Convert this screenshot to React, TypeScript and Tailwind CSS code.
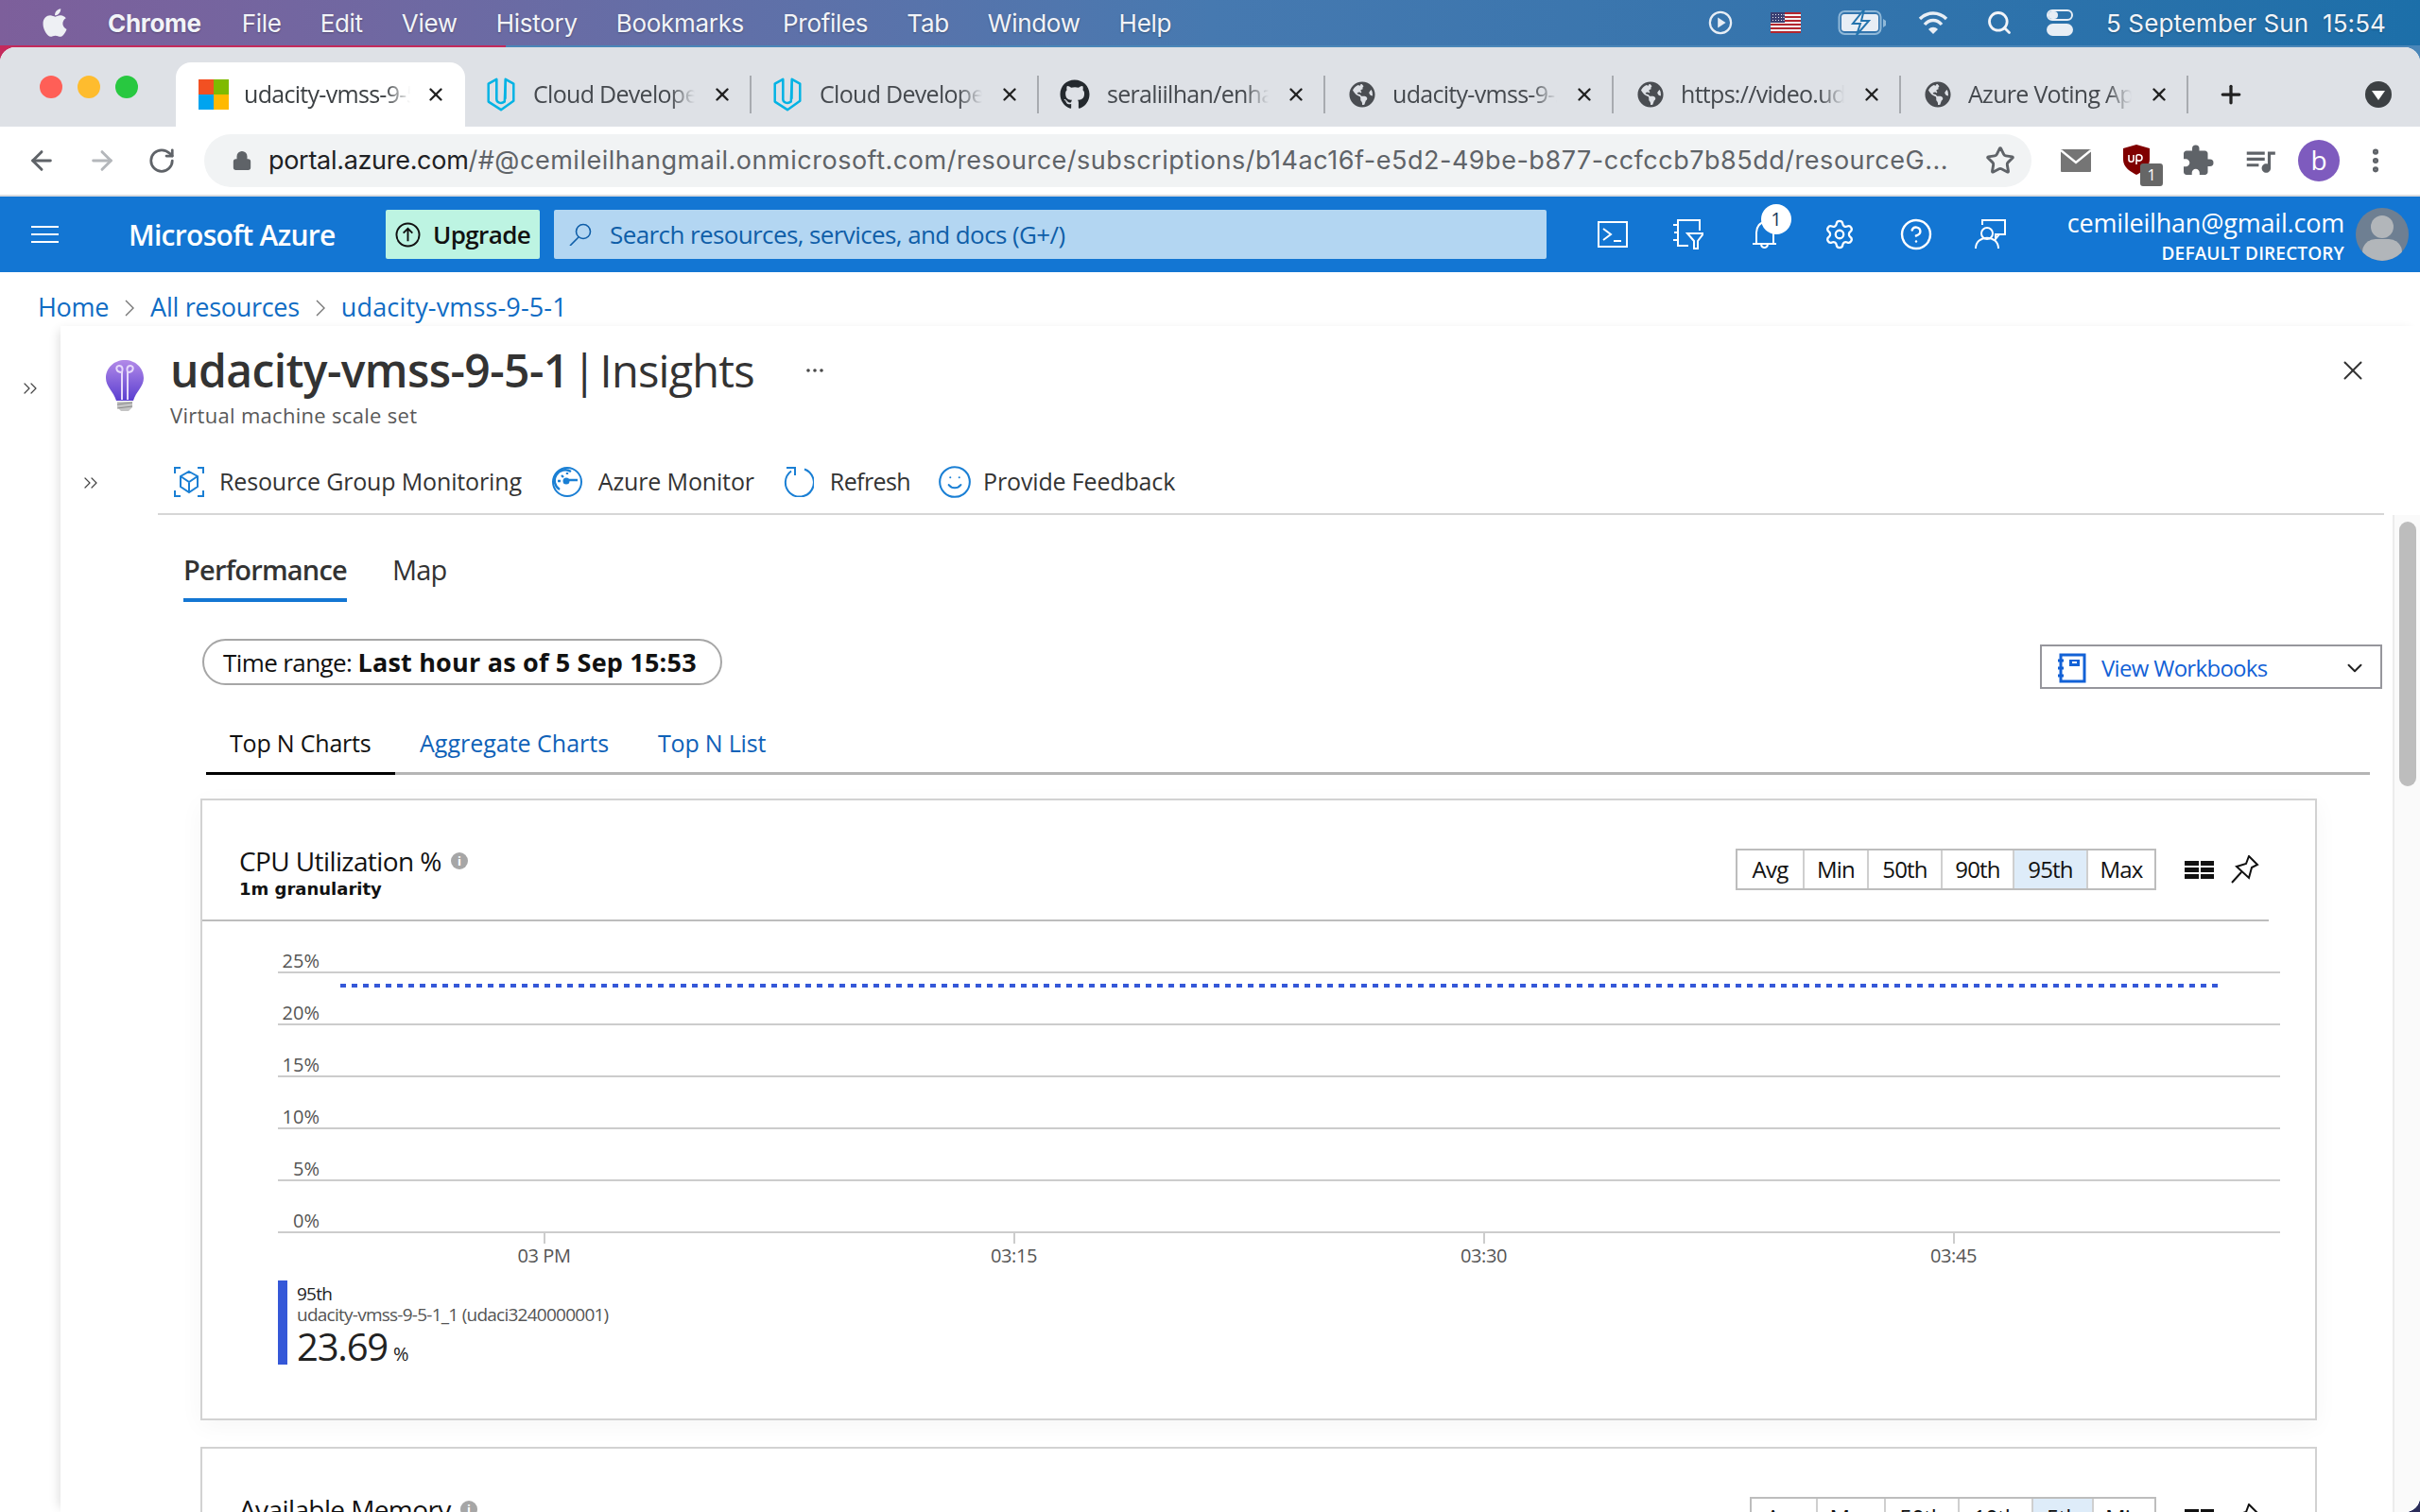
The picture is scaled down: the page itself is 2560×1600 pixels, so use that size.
import { ArrowLeft, ArrowRight, RotateCw, Lock, Star, X, Plus, ChevronDown, ChevronsRight, Search, EllipsisVertical, Settings, CircleHelp, Smile, Ellipsis } from 'lucide-react';
import { FaApple, FaGithub, FaGlobeAmericas } from 'react-icons/fa';
import { MdExtension, MdQueueMusic } from 'react-icons/md';

const tabs = [
  { title: 'Cloud Developer', icon: 'udacity', w: 'w-[303px]' },
  { title: 'Cloud Developer', icon: 'udacity', w: 'w-[304px]' },
  { title: 'seraliilhan/enhance', icon: 'github', w: 'w-[303px]' },
  { title: 'udacity-vmss-9-5-1', icon: 'globe', w: 'w-[305px]' },
  { title: 'https://video.udacity', icon: 'globe', w: 'w-[304px]' },
  { title: 'Azure Voting App', icon: 'globe', w: 'w-[304px]' },
];

const menus = ['File', 'Edit', 'View', 'History', 'Bookmarks', 'Profiles', 'Tab', 'Window', 'Help'];
const yLabels = ['25%', '20%', '15%', '10%', '5%', '0%'];
const xLabels = ['03 PM', '03:15', '03:30', '03:45'];

function UdacityLogo() {
  return (
    <svg viewBox="0 0 32 40" className="w-[32px] h-[38px] shrink-0" fill="none" stroke="#02b3e4" strokeWidth="2.6" strokeLinejoin="round">
      <path d="M2 8 L11 3 V25 C11 29 16 31 20 28 L21 3 L30 8 V27 L16 37 L2 28 Z" />
      <path d="M11 3 V25 M21 3 V25" strokeWidth="2" />
    </svg>
  );
}

function MicrosoftLogo() {
  return (
    <div className="grid grid-cols-2 w-[32px] h-[32px] shrink-0">
      <div className="bg-[#f25022]" />
      <div className="bg-[#7fba00]" />
      <div className="bg-[#00a4ef]" />
      <div className="bg-[#ffb900]" />
    </div>
  );
}

function UsFlag() {
  return (
    <svg viewBox="0 0 32 22" className="w-[32px] h-[22px]">
      <rect width="32" height="22" fill="#f4f4f4" />
      {[0, 4, 8, 12, 16, 20].map((y) => (
        <rect key={y} y={y} width="32" height="2" fill="#b3262e" />
      ))}
      <rect width="15" height="11" fill="#3a3f72" />
      {[2, 5, 8].map((y) =>
        [2, 5, 8, 11, 13.5].map((x) => <rect key={`${x}-${y}`} x={x} y={y} width="1" height="1" fill="#e8e8ee" />)
      )}
    </svg>
  );
}

function Battery() {
  return (
    <svg viewBox="0 0 52 28" className="w-[52px] h-[28px]" fill="none">
      <rect x="1.5" y="2" width="44" height="24" rx="6" stroke="#8fb8d8" strokeWidth="2" />
      <rect x="4" y="5" width="39" height="18" rx="3" fill="#e8eef5" />
      <path d="M48 10 L51 12 V17 L48 19 Z" fill="#8fb8d8" />
      <path d="M28 0 L16 15 H24 L20 27 L33 12 H25 Z" fill="#e8eef5" stroke="#2474ae" strokeWidth="2" />
    </svg>
  );
}

function Wifi() {
  return (
    <svg viewBox="0 0 32 26" className="w-[32px] h-[26px]" fill="none" stroke="#e8eef5" strokeWidth="3.4">
      <path d="M2 9 C10 1 22 1 30 9" />
      <path d="M7 15 C12 9 20 9 25 15" />
      <path d="M16 25 L11 20 C14 17 18 17 21 20 Z" fill="#e8eef5" stroke="none" />
    </svg>
  );
}

function ToggleIcon() {
  return (
    <div className="flex flex-col gap-[3px] w-[28px]">
      <div className="h-[12px] rounded-full border-2 border-[#e8eef5] flex justify-start">
        <div className="w-[10px] h-[8px] rounded-full bg-[#e8eef5]" />
      </div>
      <div className="h-[13px] rounded-full bg-[#e8eef5]" />
    </div>
  );
}

function ShieldBadge() {
  return (
    <div className="relative w-[42px] h-[44px]">
      <svg viewBox="0 0 28 32" className="w-[28px] h-[32px]">
        <path d="M14 0 L28 4 V16 C28 24 20 29 14 32 C8 29 0 24 0 16 V4 Z" fill="#800000" />
        <path d="M6 11 V16 C6 19 11 19 11 16 V11 M14 21 V12 C14 10 20 10 20 14 C20 18 14 18 14 15" stroke="#fff" strokeWidth="1.6" fill="none" />
      </svg>
      <div className="absolute left-[18px] top-[20px] w-[24px] h-[24px] rounded-[3px] bg-[#666] text-white text-[16px] leading-[24px] text-center">1</div>
    </div>
  );
}

function MailIcon() {
  return (
    <svg viewBox="0 0 32 24" className="w-[32px] h-[24px] mr-[34px]" fill="none">
      <rect width="32" height="24" rx="1" fill="#757575" />
      <path d="M0 1 L16 14 L32 1" stroke="#fff" strokeWidth="2.4" />
    </svg>
  );
}

function TerminalIcon() {
  return (
    <svg viewBox="0 0 32 28" className="w-[32px] h-[28px]" fill="none" stroke="#fff" strokeWidth="2">
      <rect x="1" y="1" width="30" height="26" />
      <path d="M6 8 L14 14 L6 20 M17 21 H25" />
    </svg>
  );
}

function FilterBookIcon() {
  return (
    <svg viewBox="0 0 32 32" className="w-[32px] h-[32px]" fill="none" stroke="#fff" strokeWidth="2">
      <path d="M28 12 V1 H5 V28 H16 M0 6 H5 M0 22 H5 M1 14 H5" />
      <path d="M15 15 H32 L26 23 V31 H22 V23 Z" />
    </svg>
  );
}

function BellIcon() {
  return (
    <svg viewBox="0 0 26 32" className="w-[26px] h-[32px]" fill="none" stroke="#fff" strokeWidth="2">
      <path d="M4 26 V14 C4 8 8 3 13 3 C18 3 22 8 22 14 V26 M0 26 H25 M9 27 C10 31 15 31 16 27" />
    </svg>
  );
}

function FeedbackIcon() {
  return (
    <svg viewBox="0 0 34 32" className="w-[34px] h-[32px]" fill="none" stroke="#fff" strokeWidth="2">
      <path d="M9 6 V1 H33 V16 H27 L23 21 V16 H29" />
      <circle cx="14" cy="15" r="6" />
      <path d="M2 31 C2 16 26 16 26 31" />
    </svg>
  );
}

function CubeIcon() {
  return (
    <svg viewBox="0 0 32 32" className="w-[32px] h-[32px]" fill="none" stroke="#1a7fd4" strokeWidth="2">
      <path d="M1 7 V1 H7 M25 1 H31 V7 M31 25 V31 H25 M7 31 H1 V25" />
      <path d="M16 5 L25 10 V21 L16 27 L7 21 V10 Z M7 10 L16 16 L25 10 M16 16 V27" />
    </svg>
  );
}

function GaugeIcon() {
  return (
    <svg viewBox="0 0 32 32" className="w-[32px] h-[32px]" fill="none" stroke="#1a7fd4" strokeWidth="2">
      <circle cx="16" cy="16" r="15" />
      <path d="M17 14 H27 M8 24 A11 11 0 0 1 20 5 M6 15 H9 M10 9 L12 11 M16 6 V8" strokeWidth="2.4" />
      <circle cx="15" cy="15" r="2.5" fill="#1a7fd4" />
    </svg>
  );
}

function RefreshIcon() {
  return (
    <svg viewBox="0 0 32 32" className="w-[32px] h-[32px]" fill="none" stroke="#1a7fd4" strokeWidth="2">
      <path d="M8 4.5 A15 15 0 1 0 22 2.5" />
      <path d="M3 1 H12 V9" />
    </svg>
  );
}

function BulbIcon() {
  return (
    <svg viewBox="0 0 40 54" className="w-[40px] h-[54px]">
      <defs>
        <linearGradient id="bulb" x1="0" y1="0" x2="0" y2="1">
          <stop offset="0" stopColor="#b28ae8" />
          <stop offset="1" stopColor="#5b3fd0" />
        </linearGradient>
      </defs>
      <path d="M20 0 C31 0 40 8 40 19 C40 28 32 33 29 43 H11 C8 33 0 28 0 19 C0 8 9 0 20 0 Z" fill="url(#bulb)" />
      <path d="M17 42 V13 M23 42 V13 M17 13 C10 13 10 6 14 6 C18 6 18 10 17 13 M23 13 C30 13 30 6 26 6 C22 6 22 10 23 13" stroke="#e6d9fa" strokeWidth="2" fill="none" />
      <path d="M12 44 H28 V50 L24 54 H16 L12 50 Z" fill="#c4c4c4" />
      <path d="M12 47 L28 45 M12 51 L28 49" stroke="#8a8a8a" strokeWidth="1" />
    </svg>
  );
}

function NotebookIcon() {
  return (
    <svg viewBox="0 0 30 32" className="w-[30px] h-[32px]" fill="none" stroke="#1261d6" strokeWidth="3">
      <path d="M3 2 H28 V30 H3 Z" />
      <path d="M0 8 H6 M0 16 H6 M0 24 H6" />
      <rect x="12" y="7" width="11" height="7" fill="#1261d6" stroke="none" />
      <rect x="15" y="9" width="5" height="2" fill="#fff" stroke="none" />
    </svg>
  );
}

function PinIcon() {
  return (
    <svg viewBox="0 0 30 30" className="w-[30px] h-[30px]" fill="none" stroke="#111" strokeWidth="2">
      <path d="M1 29 L11 18 M19 1 L28 10 L22 13 L19 24 L6 12 L16 9 Z" />
    </svg>
  );
}

function ChevronPlain() {
  return (
    <svg viewBox="0 0 12 20" className="w-[12px] h-[20px] mx-[6px]" fill="none" stroke="#777" strokeWidth="1.4">
      <path d="M2 2 L10 10 L2 18" />
    </svg>
  );
}

function TabIcon({ name }: { name: string }) {
  if (name === 'udacity') return <UdacityLogo />;
  if (name === 'github') return <FaGithub className="w-[32px] h-[32px] shrink-0 text-[#24292e]" />;
  return <FaGlobeAmericas className="w-[28px] h-[28px] ml-[3px] shrink-0 text-[#4a4d52]" />;
}

function MetricHeader({ title, sub, options, active }: { title: string; sub?: string; options: { label: string; w: string }[]; active: string }) {
  return (
    <div className="flex items-center justify-between h-[128px] pt-[24px] mr-[49px] border-b-2 border-[#bdbdbd] pl-[39px]">
      <div className="flex flex-col">
        <div className="flex items-center gap-[10px] h-[38px] text-[28px] tracking-[-0.6px] text-[#111]">
          {title}
          <span className="w-[18px] h-[18px] rounded-full bg-[#a6a6a6] text-white text-[13px] leading-[18px] text-center font-bold">i</span>
        </div>
        {sub ? <div className="font-['DejaVu_Sans'] font-bold text-[18px] leading-[22px] text-[#111]">{sub}</div> : <div className="h-[22px]" />}
      </div>
      <div className="flex items-center -mt-[4px]">
        <div className="flex h-[44px] border-2 border-[#bdbdbd] text-[24px] tracking-[-0.8px] text-[#111]">
          {options.map((o, i) => (
            <div
              key={o.label}
              className={`${o.w} flex items-center justify-center ${i > 0 ? 'border-l-2 border-[#cfcfcf]' : ''} ${o.label === active ? 'bg-[#deecf9]' : ''}`}
            >
              {o.label}
            </div>
          ))}
        </div>
        <div className="grid grid-cols-2 gap-x-[2px] gap-y-[2px] ml-[30px] w-[31px]">
          {[0, 1, 2, 3, 4, 5].map((n) => (
            <div key={n} className="h-[5px] bg-[#111]" />
          ))}
        </div>
        <div className="ml-[18px] mr-[10px]">
          <PinIcon />
        </div>
      </div>
    </div>
  );
}

export default function App() {
  return (
    <div className="w-[2560px] h-[1600px] overflow-hidden font-['Open_Sans',sans-serif] bg-[#2b2d5a]">
      {/* Mac menu bar */}
      <div className="h-12 flex items-center justify-between bg-gradient-to-r from-[#7d5f9b] via-[#4679b0] to-[#1c6fa9] font-['Inter',sans-serif] text-[26px] text-[#f2f4f8] pl-[43px] pr-[36px] [text-shadow:0_1px_2px_rgba(0,0,0,0.3)]">
        <div className="flex items-center">
          <FaApple className="w-[30px] h-[34px] text-[#eef0f4] mr-[41px]" />
          <span className="font-bold mr-[43px] tracking-[-0.3px]">Chrome</span>
          <div className="flex items-center gap-[41px] tracking-[-0.3px]">
            {menus.map((m) => (
              <span key={m}>{m}</span>
            ))}
          </div>
        </div>
        <div className="flex items-center">
          <svg viewBox="0 0 28 28" className="w-[26px] h-[26px] mr-[40px]" fill="none" stroke="#e8eef5" strokeWidth="2.4">
            <circle cx="14" cy="14" r="12" />
            <path d="M11 8 L20 14 L11 20 Z" fill="#e8eef5" stroke="none" />
          </svg>
          <div className="mr-[39px]"><UsFlag /></div>
          <div className="mr-[33px]"><Battery /></div>
          <div className="mr-[40px]"><Wifi /></div>
          <Search className="w-[28px] h-[28px] mr-[36px]" strokeWidth={2.4} />
          <div className="mr-[35px]"><ToggleIcon /></div>
          <span className="tracking-[0.1px]">5 September Sun&nbsp;&nbsp;15:54</span>
        </div>
      </div>

      {/* Browser window */}
      <div className="h-[1552px] overflow-hidden rounded-br-[16px] bg-[linear-gradient(to_right,#c42a5c_535px,#4a86b8_535px)]">
        <div className="h-full pt-[2px]">
          <div className="h-full flex flex-col overflow-hidden rounded-t-[16px] bg-white">
            {/* Tab strip */}
            <div className="h-[84px] shrink-0 bg-[#dee1e6] flex items-end">
              <div className="w-[186px] h-full flex items-center gap-[16px] pl-[42px]">
                <div className="w-[24px] h-[24px] rounded-full bg-[#ff5f57]" />
                <div className="w-[24px] h-[24px] rounded-full bg-[#febc2e]" />
                <div className="w-[24px] h-[24px] rounded-full bg-[#28c840]" />
              </div>
              <div className="w-[306px] h-[68px] bg-white rounded-t-[16px] flex items-center pl-[24px] pr-[20px] gap-[16px]">
                <MicrosoftLogo />
                <span className="flex-1 overflow-hidden whitespace-nowrap text-[25px] tracking-[-0.7px] text-[#3c4043] [mask-image:linear-gradient(to_right,black_85%,transparent)]">udacity-vmss-9-5-1</span>
                <X className="w-[22px] h-[22px] text-[#222]" strokeWidth={2.6} />
              </div>
              {tabs.map((t, i) => (
                <div key={i} className={`${t.w} h-[68px] flex items-center pl-[22px] pr-[20px] gap-[18px] relative`}>
                  <TabIcon name={t.icon} />
                  <span className="flex-1 overflow-hidden whitespace-nowrap text-[25px] tracking-[-0.7px] text-[#45494e] [mask-image:linear-gradient(to_right,black_85%,transparent)]">{t.title}</span>
                  <X className="w-[22px] h-[22px] text-[#222]" strokeWidth={2.6} />
                  <div className="absolute right-0 top-[14px] w-[2px] h-[40px] bg-[#a8abb0]" />
                </div>
              ))}
              <div className="flex-1 h-[68px] flex items-center justify-between pl-[30px] pr-[30px]">
                <Plus className="w-[30px] h-[30px] text-[#222]" strokeWidth={2.6} />
                <div className="w-[28px] h-[28px] rounded-full bg-[#3c4043] flex items-center justify-center">
                  <div className="w-0 h-0 border-l-[7px] border-r-[7px] border-t-[10px] border-l-transparent border-r-transparent border-t-white mt-[2px]" />
                </div>
              </div>
            </div>

            {/* Address bar */}
            <div className="h-[74px] shrink-0 flex items-center border-b-2 border-[#dadce0] bg-white">
              <div className="w-[216px] flex items-center gap-[32px] pl-[28px]">
                <ArrowLeft className="w-[32px] h-[32px] text-[#5f6368]" strokeWidth={2.2} />
                <ArrowRight className="w-[32px] h-[32px] text-[#b4b7bb]" strokeWidth={2.2} />
                <RotateCw className="w-[30px] h-[30px] text-[#5f6368]" strokeWidth={2.2} />
              </div>
              <div className="w-[1933px] h-[56px] rounded-full bg-[#f1f3f4] flex items-center pl-[29px] pr-[17px]">
                <Lock className="w-[22px] h-[24px] text-[#5f6368] fill-[#5f6368] mr-[17px]" />
                <span className="flex-1 pt-[1px] font-['Inter',sans-serif] text-[27px] tracking-[0.52px] whitespace-nowrap overflow-hidden text-[#5f6368]">
                  <span className="text-[#202124] tracking-[-0.3px]">portal.azure.com</span>/#@cemileilhangmail.onmicrosoft.com/resource/subscriptions/b14ac16f-e5d2-49be-b877-ccfccb7b85dd/resourceG...
                </span>
                <Star className="w-[32px] h-[32px] text-[#5f6368] ml-[20px]" strokeWidth={2.2} />
              </div>
              <div className="flex-1 flex items-center pl-[31px]">
                <MailIcon />
                <div className="mr-[22px] mt-[10px]"><ShieldBadge /></div>
                <MdExtension className="w-[36px] h-[36px] text-[#5f6368] mr-[29px] -ml-[3px]" />
                <MdQueueMusic className="w-[38px] h-[38px] text-[#5f6368] mr-[21px]" />
                <div className="w-[44px] h-[44px] rounded-full bg-[#7e5bbe] text-white text-[28px] leading-[42px] text-center mr-[22px]">b</div>
                <EllipsisVertical className="w-[32px] h-[32px] text-[#5f6368]" strokeWidth={2.6} />
              </div>
            </div>

            {/* Azure top bar */}
            <div className="h-[80px] shrink-0 flex items-center bg-[#1376d3] text-white">
              <div className="w-[136px] pl-[33px] flex flex-col gap-[6px]">
                <div className="w-[29px] h-[2px] bg-white" />
                <div className="w-[29px] h-[2px] bg-white" />
                <div className="w-[29px] h-[2px] bg-white" />
              </div>
              <span className="w-[272px] text-[30px] font-semibold tracking-[-0.7px]">Microsoft Azure</span>
              <div className="w-[163px] h-[52px] rounded-[2px] bg-[#bdf4e2] text-[#111] flex items-center pl-[10px] gap-[13px] text-[26px] font-semibold tracking-[-0.6px]">
                <svg viewBox="0 0 28 28" className="w-[27px] h-[27px]" fill="none" stroke="#111" strokeWidth="2">
                  <circle cx="14" cy="14" r="12.5" />
                  <path d="M14 21 V8 M9 12 L14 7 L19 12" />
                </svg>
                Upgrade
              </div>
              <div className="ml-[15px] w-[1050px] h-[52px] rounded-[2px] bg-[#b3d6f2] flex items-center pl-[16px] gap-[19px] text-[26px] tracking-[-0.6px] text-[#0f5ea8]">
                <svg viewBox="0 0 24 24" className="w-[24px] h-[24px]" fill="none" stroke="#0f5ea8" strokeWidth="1.6">
                  <circle cx="15" cy="9" r="7.5" />
                  <path d="M10 15 L1 24" />
                </svg>
                Search resources, services, and docs (G+/)
              </div>
              <div className="w-[54px]" />
              <div className="w-[80px]"><TerminalIcon /></div>
              <div className="w-[84px]"><FilterBookIcon /></div>
              <div className="w-[75px] relative">
                <BellIcon />
                <div className="absolute left-[9px] -top-[16px] w-[32px] h-[32px] rounded-full bg-white text-[#1b3a5c] text-[20px] leading-[32px] text-center">1</div>
              </div>
              <div className="w-[80px]"><Settings className="w-[34px] h-[34px]" strokeWidth={1.6} /></div>
              <div className="w-[79px]"><CircleHelp className="w-[36px] h-[36px]" strokeWidth={1.6} /></div>
              <div className="w-[50px]"><FeedbackIcon /></div>
              <div className="flex-1 flex flex-col items-end">
                <span className="text-[27px] leading-[36px] tracking-[-0.2px]">cemileilhan@gmail.com</span>
                <span className="text-[19px] leading-[22px] mt-[3px] font-semibold tracking-[0.15px]">DEFAULT DIRECTORY</span>
              </div>
              <div className="w-[56px] h-[56px] rounded-full bg-[#6e7f92] mx-[12px] overflow-hidden flex flex-col items-center pt-[8px]">
                <div className="w-[24px] h-[24px] rounded-full bg-[#b2b6ba]" />
                <div className="w-[42px] h-[24px] rounded-t-[14px] bg-[#b2b6ba] mt-[1px]" />
              </div>
            </div>

            {/* Breadcrumb */}
            <div className="h-[57px] shrink-0 flex items-center pl-[40px] gap-[10px] text-[27px] tracking-[-0.3px] text-[#0f6cc4] bg-white pt-[18px]">
              <span>Home</span>
              <ChevronPlain />
              <span>All resources</span>
              <ChevronPlain />
              <span className="tracking-[0.15px]">udacity-vmss-9-5-1</span>
            </div>

            {/* Blade */}
            <div className="flex-1 min-h-0 flex bg-white">
              <div className="w-[64px] shrink-0 pl-[20px] pt-[52px]">
                <ChevronsRight className="w-[24px] h-[28px] text-[#444]" strokeWidth={1.2} />
              </div>
              <div className="flex-1 min-w-0 flex flex-col shadow-[-6px_0_10px_-4px_rgba(0,0,0,0.12)]">
                <div className="h-[135px] shrink-0 flex pl-[48px] relative">
                  <div className="w-[68px] pt-[36px]"><BulbIcon /></div>
                  <div className="flex flex-col pt-[20px]">
                    <div className="flex items-center h-[54px] text-[#333]">
                      <span className="text-[48px] font-semibold tracking-[-0.6px]">udacity-vmss-9-5-1</span>
                      <span className="text-[48px] w-[5px] ml-[14px] flex justify-center">|</span>
                      <span className="text-[47px] tracking-[-0.8px] ml-[14px]">Insights</span>
                      <Ellipsis className="w-[24px] h-[24px] ml-[52px] text-[#444]" strokeWidth={1.6} />
                    </div>
                    <span className="text-[22px] leading-[30px] mt-[5px] tracking-[0.3px] text-[#595959]">Virtual machine scale set</span>
                  </div>
                  <X className="absolute right-[54px] top-[30px] w-[34px] h-[34px] text-[#333]" strokeWidth={1.4} />
                </div>

                <div className="h-[65px] shrink-0 flex">
                  <div className="w-[103px] shrink-0 pl-[20px] pt-[17px]">
                    <ChevronsRight className="w-[24px] h-[28px] text-[#444]" strokeWidth={1.2} />
                  </div>
                  <div className="flex-1 mr-[38px] border-b-2 border-[#d6d6d6] flex items-center pl-[17px] text-[25px] tracking-[-0.15px] text-[#333] pb-[4px]">
                    <CubeIcon />
                    <span className="ml-[16px] mr-[32px]">Resource Group Monitoring</span>
                    <GaugeIcon />
                    <span className="ml-[17px] mr-[31px]">Azure Monitor</span>
                    <RefreshIcon />
                    <span className="ml-[17px] mr-[28px] tracking-[-0.6px]">Refresh</span>
                    <Smile className="w-[38px] h-[38px] text-[#1a7fd4]" strokeWidth={1.3} />
                    <span className="ml-[11px]">Provide Feedback</span>
                  </div>
                </div>

                <div className="flex-1 min-h-0 flex">
                  <div className="w-[103px] shrink-0" />
                  <div className="flex-1 min-w-0 overflow-hidden">
                    {/* Performance / Map */}
                    <div className="h-[92px] flex items-end pl-[27px] gap-[48px] text-[29px] tracking-[-0.8px] text-[#333]">
                      <span className="h-[74px] leading-[80px] font-semibold border-b-4 border-[#1376d3]">Performance</span>
                      <span className="h-[74px] leading-[80px]">Map</span>
                    </div>

                    {/* Time range and workbooks */}
                    <div className="flex justify-between items-start pt-[39px] h-[120px] pl-[47px] pr-[11px]">
                      <div className="h-[49px] pl-[20px] pr-[25px] pt-[2px] rounded-full border-2 border-[#a6a6a6] flex items-center text-[26px] tracking-[-0.6px] text-[#111]">
                        Time range:&nbsp;<b className="font-bold text-[27px] tracking-[0.2px]">Last hour as of 5 Sep 15:53</b>
                      </div>
                      <div className="mt-[6px] w-[362px] h-[47px] pt-[2px] border-2 border-[#96969c] flex items-center pl-[17px] pr-[14px] text-[24px] tracking-[-0.7px] text-[#1261d6]">
                        <NotebookIcon />
                        <span className="flex-1 ml-[16px]">View Workbooks</span>
                        <ChevronDown className="w-[26px] h-[26px] text-[#222]" strokeWidth={1.8} />
                      </div>
                    </div>

                    {/* Sub tabs */}
                    <div className="h-[63px] ml-[51px] mr-[24px] border-b-[3px] border-[#b5b5b5] flex items-end text-[25px] tracking-[-0.2px]">
                      <span className="w-[200px] h-[63px] -mb-[3px] pl-[25px] leading-[59px] border-b-[3px] border-black text-[#111]">Top N Charts</span>
                      <span className="w-[278px] pl-[26px] h-[60px] leading-[59px] tracking-[0px] text-[#0f62b8]">Aggregate Charts</span>
                      <span className="h-[60px] leading-[59px] text-[#0f62b8]">Top N List</span>
                    </div>

                    {/* CPU card */}
                    <div className="ml-[45px] w-[2239px] h-[658px] mt-[25px] border-2 border-[#d2d2d2] shadow-[0_6px_24px_rgba(0,0,0,0.04)]">
                      <MetricHeader
                        title="CPU Utilization %"
                        sub="1m granularity"
                        active="95th"
                        options={[
                          { label: 'Avg', w: 'w-[69px]' },
                          { label: 'Min', w: 'w-[68px]' },
                          { label: '50th', w: 'w-[78px]' },
                          { label: '90th', w: 'w-[76px]' },
                          { label: '95th', w: 'w-[78px]' },
                          { label: 'Max', w: 'w-[72px]' },
                        ]}
                      />
                      <div className="relative ml-[80px] mr-[37px]">
                        {yLabels.map((l) => (
                          <div key={l} className="h-[55px] border-b-2 border-[#cccccc] flex items-end">
                            <span className="w-[44px] text-right text-[20px] leading-[22px] text-[#555]">{l}</span>
                          </div>
                        ))}
                        <svg className="absolute left-[66px] top-[65px] w-[1987px] h-[6px]">
                          <line x1="0" y1="3" x2="1987" y2="3" stroke="#3558d8" strokeWidth="4" strokeDasharray="6 6" />
                        </svg>
                        <div className="flex pl-[33px]">
                          {xLabels.map((l) => (
                            <div key={l} className="w-[497px] flex flex-col items-center">
                              <div className="w-[2px] h-[11px] bg-[#cccccc]" />
                              <span className="text-[20px] leading-[26px] tracking-[-0.4px] text-[#555]">{l}</span>
                            </div>
                          ))}
                        </div>
                        <div className="flex mt-[13px]">
                          <div className="w-[10px] h-[89px] bg-[#3558d8]" />
                          <div className="pl-[10px] flex flex-col text-[19px] leading-[22px] tracking-[-0.75px]">
                            <span className="text-[#222] mt-[3px]">95th</span>
                            <span className="text-[#555]">udacity-vmss-9-5-1_1 (udaci3240000001)</span>
                            <span className="text-[40px] leading-[46px] tracking-[-1.2px] text-[#222]">
                              23.69<span className="text-[20px] ml-[6px]">%</span>
                            </span>
                          </div>
                        </div>
                      </div>
                    </div>

                    {/* Memory card, cut off by the window */}
                    <div className="ml-[45px] w-[2239px] h-[400px] mt-[28px] border-2 border-[#d2d2d2]">
                      <MetricHeader
                        title="Available Memory"
                        active="5th"
                        options={[
                          { label: 'Avg', w: 'w-[68px]' },
                          { label: 'Max', w: 'w-[72px]' },
                          { label: '50th', w: 'w-[78px]' },
                          { label: '10th', w: 'w-[78px]' },
                          { label: '5th', w: 'w-[64px]' },
                          { label: 'Min', w: 'w-[66px]' },
                        ]}
                      />
                    </div>
                  </div>
                  {/* Scrollbar */}
                  <div className="w-[29px] shrink-0 border-l-2 border-[#ececec] bg-[#fafafa] pl-[5px] pt-[7px]">
                    <div className="w-[18px] h-[280px] rounded-full bg-[#bdbdbd]" />
                  </div>
                </div>
              </div>
            </div>
          </div>
        </div>
      </div>
    </div>
  );
}
